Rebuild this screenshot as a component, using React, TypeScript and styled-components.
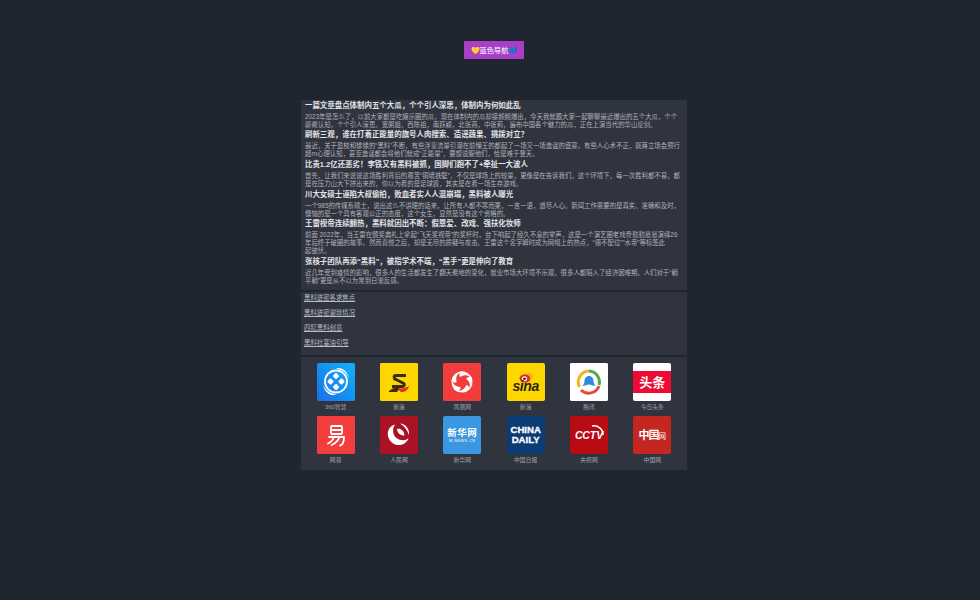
import React from "react";
import styled, { createGlobalStyle } from "styled-components";

const Global = createGlobalStyle`
  html, body { margin: 0; padding: 0; background: #1f2630; }
  body { font-family: "Liberation Sans", "Noto Sans CJK SC", sans-serif; }
`;
const Page = styled.div`
  width: 980px; height: 600px; background: #1f2630; display: flex; flex-direction: column; align-items: center; padding: 41px 0 0 8px; box-sizing: border-box; overflow: hidden;
`;
const Badge = styled.a`
  width: 60px; height: 18px; background: #a93fc6; color: #fff; font: 7.2px/18px "Noto Sans CJK SC", sans-serif; text-align: center; display: block; margin-bottom: 41px; white-space: nowrap;
`;
const Column = styled.main`
  width: 386px; display: flex; flex-direction: column; gap: 2px;
`;
const Panel = styled.section`
  background: #30343f;
`;
const Articles = styled(Panel)`
  height: 190px; padding: 0.5px 4px 0; box-sizing: border-box; overflow: hidden; display: flex; flex-direction: column;
`;
const Title = styled.h3`
  margin: 0; height: 10.5px; font: 700 7.45px/10.5px "Liberation Sans", "Noto Sans CJK SC", sans-serif; color: #e2e3e7; white-space: nowrap;
`;
const Summary = styled.p`
  margin: 1.7px 0 1.5px; font: 400 6.4px/8px "Liberation Sans", "Noto Sans CJK SC", sans-serif; color: #b0b3ba; white-space: pre;
`;
const Links = styled(Panel)`
  height: 63px; padding: 2px 3px 0; box-sizing: border-box; display: flex; flex-direction: column; gap: 7.5px;
`;
const LinkItem = styled.a`
  display: block; font: 400 6.4px/7.4px "Noto Sans CJK SC", sans-serif; color: #b9bcc3; text-decoration: underline; width: fit-content;
`;
const Apps = styled(Panel)`
  height: 113px; padding: 6px 3px 0; box-sizing: border-box; display: grid; grid-template-columns: repeat(6, 1fr); grid-auto-rows: 53px; justify-items: center;
`;
const AppItem = styled.a`
  display: flex; flex-direction: column; align-items: center; gap: 2px;
`;
const Tile = styled.div<{ $bg: string }>`
  width: 38px; height: 38px; border-radius: 2px; background: ${(p) => p.$bg}; display: flex; align-items: center; justify-content: center; overflow: hidden; color: #fff;
`;
const Label = styled.span`
  font: 400 5.8px/8px "Liberation Sans", "Noto Sans CJK SC", sans-serif; color: #a0a3ab; white-space: nowrap;
`;
const Sina = styled.span`
  font: italic 700 14px/14px "Liberation Sans", sans-serif; color: #2a2410; letter-spacing: -.4px;
`;
const Toutiao = styled.div`
  width: 100%; height: 22px; background: #ee0a33; color: #fff; text-align: center; font: 700 13px/22px "Noto Sans CJK SC", sans-serif;
`;
const Xinhua = styled.div`
  display: flex; flex-direction: column; align-items: center; color: #fff; font: 700 9.5px/11px "Noto Sans CJK SC", sans-serif; letter-spacing: .5px;
  small { font: 400 3.8px/6px "Liberation Sans", sans-serif; letter-spacing: .5px; }
`;
const Daily = styled.div`
  color: #fff; font: 700 9.6px/10px "Liberation Sans", sans-serif; text-align: center; -webkit-text-stroke: .3px #fff;
`;
const Cctv = styled.div`
  position: relative; color: #fff; font: italic 700 10.5px/12px "Liberation Sans", sans-serif; letter-spacing: -.1px;
`;
const CnNet = styled.div`
  color: #fff; font: 700 11px/14px "Noto Sans CJK SC", sans-serif; white-space: nowrap; letter-spacing: -1px;
  small { font-size: 7.5px; font-weight: 400; letter-spacing: 0; }
`;
const SinaWrap = styled.div`
  display: flex; flex-direction: column; align-items: center; margin-top: 1px;
  svg { margin-bottom: -4px; display: block; }
`;
const CctvArc = styled.svg`
  position: absolute; right: -3px; top: -6px;
`;

const articles = [
  ["一篇文章盘点体制内五个大瓜，个个引人深思，体制内为何如此乱", "2023年是怎么了，以前大家都是吃娱乐圈的瓜，现在体制内的瓜却接频频爆出，今天我就跟大家一起聊聊最近爆出的五个大瓜，个个\n颠覆认知，个个引人深思。宽粥姐，西陈祖，南跃颖，北张燕，中张莉，遍布中国各个魅力的瓜，正在上演当代的华山论剑。"],
  ["刷新三观，谁在打着正能量的旗号人肉搜索、造谣蔬果、挑拨对立？", "最近，关于盈校和徐徐的“黑料”不断，有些浮靠流量引潮在前懂王的都起了一场又一场造谣的盛宴。有些人心术不正，既蒋立场会预行\n超rn心理认知，甚至造谣都会将他们就成“正能量”，要想说服他们，恰是难于登天。"],
  ["比贵1.2亿还恶劣！李铁又有黑料被抓，国脚们跑不了+牵扯一大波人", "首先，让我们来说说这场胜利背后的艰苦“铜墙铁壁”，不仅是球场上的较量，更像是在告诉我们，这个环境下，每一次胜利都不易，都\n是在压力山大下拼出来的，你以为看的是足球赛，其实是在看一场生存游戏。"],
  ["川大女硕士诬陷大叔偷拍，败血者实人人混崩塌，黑料被人曝光", "一个985的传媒系硕士，说出这么不讲理的话来，让所有人都不寒而栗，一言一语，道尽人心。新闻工作需要的是真实、准确和及时，\n懊恼的是一个具有客观公正的态度，这个女生，显然是没有这个资格的。"],
  ["王雷视帝连续翻热，黑料就因出不断：假恩爱、改戏、强扶化妆师", "前面 2022年，当王雷在颁奖典礼上拿起“飞天奖视帝”的奖杯时，台下响起了经久不息的掌声，这是一个演艺圈老戏骨勤勤恳恳演绎26\n年后终于破圈的故事。然而喜悦之后，却是无尽的质疑与攻击。王雷这个名字瞬时成为网络上的热点，“德不配位”“水帝”等标签此\n起彼伏。"],
  ["张核子团队再添“黑料”，被指学术不端，“黑手”更是伸向了教育", "近几年受到疫情的影响，很多人的生活都发生了翻天覆地的变化，就业市场大环境不乐观，很多人都陷入了经济困难期，人们对于“躺\n平躺”更是从不以为常到日渐反感。"],
] as const;

const links = ["黑料进密各求焦点", "黑料进密谢珍情况", "四缸黑料创意", "黑料社塞油引导"];

const Icon360 = () => (
  <svg width="38" height="38" viewBox="0 0 38 38"><defs><linearGradient id="b" x1="0" y1="1" x2="1" y2="0"><stop offset="0" stopColor="#1670e8"/><stop offset="1" stopColor="#12b2fb"/></linearGradient></defs><rect width="38" height="38" fill="url(#b)"/><circle cx="19" cy="18.500" r="11" fill="none" stroke="#fff" strokeWidth="1.800"/><path d="M6 22c3 6 8 9 13 9-3 3-11 0-13-9ZM32 15c-3-6-8-9-13-9 3-3 11 0 13 9Z" fill="#fff"/><g fill="#fff"><rect x="16.500" y="10.500" width="5" height="5" rx="1.200" transform="rotate(45 19 13)"/><rect x="16.500" y="21.500" width="5" height="5" rx="1.200" transform="rotate(45 19 24)"/><rect x="11" y="16" width="5" height="5" rx="1.200" transform="rotate(45 13.500 18.500)"/><rect x="22" y="16" width="5" height="5" rx="1.200" transform="rotate(45 24.500 18.500)"/></g></svg>
);
const IconSohu = () => (
  <svg width="38" height="38" viewBox="0 0 38 38"><rect width="38" height="38" fill="#fdd600"/><path d="M26 12.500H16c-2.500 0-2.500 3 0 4l7 3.500c2 1 1.500 3.500-1 3.500H12" fill="none" stroke="#3d2b10" strokeWidth="3"/><path d="M9 28c3-3 7-4 11-3l-3 4H9Z" fill="#3d2b10"/><path d="M18 25c4 1 8 0 11-2-1 4-4 6-7 6-2 0-3-2-4-4Z" fill="#e7301f"/></svg>
);
const IconPhoenix = () => (
  <svg width="38" height="38" viewBox="0 0 38 38"><rect width="38" height="38" fill="#f33d3d"/><g fill="#fff" transform="translate(19 19)">{[0, 72, 144, 216, 288].map((a) => <path key={a} transform={`rotate(${a})`} d="M-2-10.500A10.500 10.500 0 0 1 10-3C7-7 3-8-2-5C-3-7-3-9-2-10.500Z"/>)}</g></svg>
);
const IconTencent = () => (
  <svg width="38" height="38" viewBox="0 0 38 38"><rect width="38" height="38" fill="#fff"/><g fill="none" strokeWidth="3"><path d="M9.500 24A11 11 0 0 1 19 8" stroke="#f5b51b"/><path d="M19 8a11 11 0 0 1 10 14" stroke="#4eaa4c"/><path d="M29 23a11 11 0 0 1-18 4" stroke="#e44a3c"/></g><path d="M19 13c3 0 4.500 2.500 4.500 5 0 2 1 3.500 2 4.500-2 1-4-1-6.500-1s-4.500 2-6.500 1c1-1 2-2.500 2-4.500 0-2.500 1.500-5 4.500-5Z" fill="#2e8bd8"/></svg>
);
const IconWangyi = () => (
  <svg width="38" height="38" viewBox="0 0 38 38"><rect width="38" height="38" fill="#f43d3d"/><g fill="none" stroke="#fff" strokeWidth="1.800" strokeLinecap="round" strokeLinejoin="round"><rect x="14" y="10" width="11" height="8" rx="1"/><path d="M14 14h11M12 21h15c0 4-1 8-4 8.500M17 21c-1 3-3 5-6 6.500M22.500 21c-1 3-3.500 6-8 8"/></g></svg>
);
const IconPeople = () => (
  <svg width="38" height="38" viewBox="0 0 38 38"><rect width="38" height="38" fill="#ac1226"/><path d="M15 8.500C9 10 6 16 9 23c3 6 11 8 16 4 2-1.500 3-3 3.500-5-3 3-8 3-12 0-4-3-4.500-9-1.500-13.500Z" fill="#fff"/><path d="M17 13c3-1 7 1 7.500 6.500-3 0-7-1.500-7.500-6.500ZM20 7.500c5 0 10 5 9 12-1-4-4-9-9-12Z" fill="#fff"/></svg>
);
const IconWeibo = () => (
  <svg width="18" height="11" viewBox="0 0 18 11"><ellipse cx="8" cy="6.500" rx="5.500" ry="4.200" fill="#e5322e"/><circle cx="7.500" cy="6.800" r="2.500" fill="#fff"/><circle cx="7.500" cy="6.800" r="1.300" fill="#222"/><path d="M11 1.500a4 4 0 0 1 4 4" fill="none" stroke="#f08a1c" strokeWidth="1.200"/></svg>
);

const apps: [string, string, React.ReactNode][] = [
  ["360智慧", "#1670e8", <Icon360 />],
  ["新浪", "#fdd600", <IconSohu />],
  ["凤凰网", "#f33d3d", <IconPhoenix />],
  ["新浪", "#fdd600", <SinaWrap><IconWeibo /><Sina>sina</Sina></SinaWrap>],
  ["腾讯", "#fff", <IconTencent />],
  ["今日头条", "#fff", <Toutiao>头条</Toutiao>],
  ["网易", "#f43d3d", <IconWangyi />],
  ["人民网", "#ac1226", <IconPeople />],
  ["新华网", "#3a97e0", <Xinhua>新华网<small>M.NEWS.CN</small></Xinhua>],
  ["中国日报", "#0c3c73", <Daily>CHINA<br />DAILY</Daily>],
  ["央视网", "#b80b13", <Cctv><CctvArc width="16" height="16" viewBox="0 0 16 16"><path d="M2 3a9 9 0 0 1 11 9" fill="none" stroke="#fff" strokeWidth="1.500"/></CctvArc>CCTV</Cctv>],
  ["中国网", "#c5261f", <CnNet>中国<small>网</small></CnNet>],
];

export default function App() {
  return (
    <Page>
      <Global />
      <Badge>💛蓝色导航💙</Badge>
      <Column>
        <Articles>
          {articles.map(([t, s]) => (
            <React.Fragment key={t}>
              <Title>{t}</Title>
              <Summary>{s}</Summary>
            </React.Fragment>
          ))}
        </Articles>
        <Links>
          {links.map((l) => <LinkItem key={l}>{l}</LinkItem>)}
        </Links>
        <Apps>
          {apps.map(([n, bg, icon], i) => (
            <AppItem key={i}>
              <Tile $bg={bg}>{icon}</Tile>
              <Label>{n}</Label>
            </AppItem>
          ))}
        </Apps>
      </Column>
    </Page>
  );
}
